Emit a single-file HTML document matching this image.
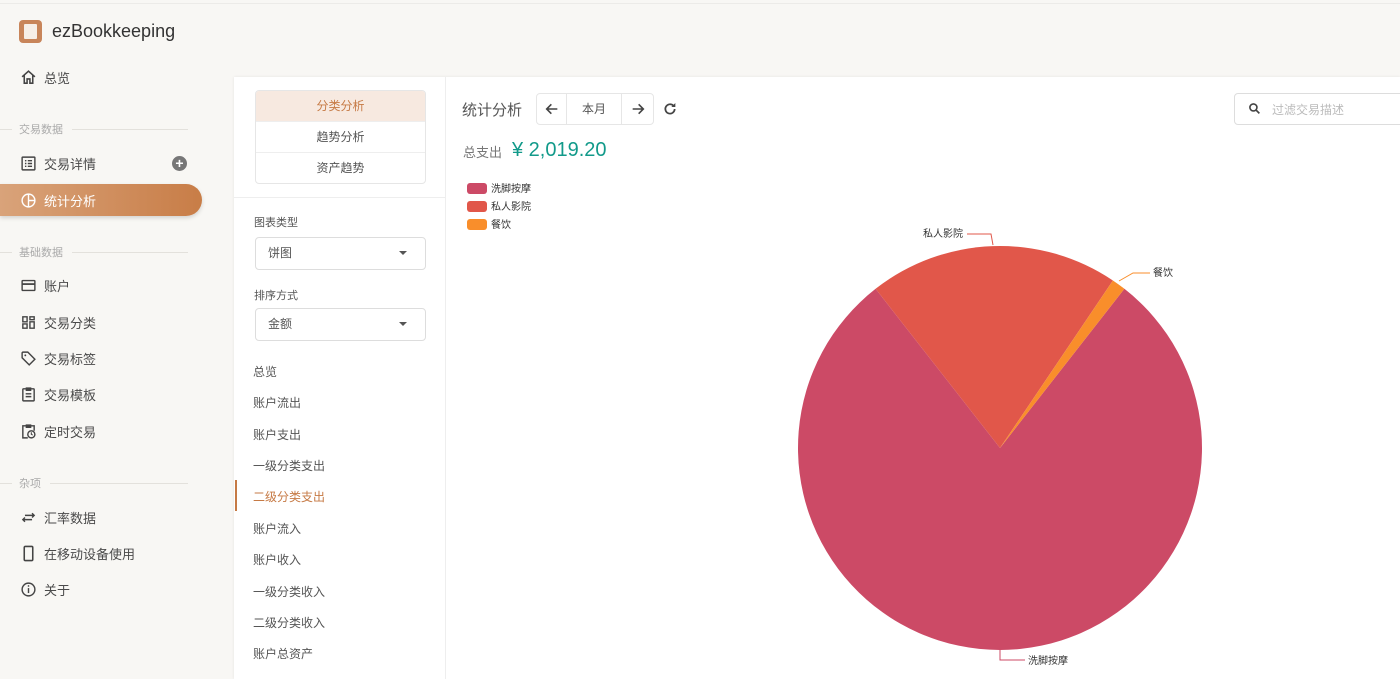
<!DOCTYPE html>
<html><head><meta charset="utf-8"><style>
*{margin:0;padding:0;box-sizing:border-box}
body{width:1400px;height:679px;overflow:hidden;background:#f8f7f4;font-family:"Liberation Sans","Noto Sans CJK SC",sans-serif;color:#444;position:relative}
.abs{position:absolute}
.nav{position:absolute;left:20px;font-size:13px;color:#4a4a4a;display:flex;align-items:center;margin-top:-1px}
.nav svg{width:17px;height:17px;margin-right:7px}
.sec{position:absolute;left:0;width:188px;font-size:11px;color:#aaa;display:flex;align-items:center}
.sec:before{content:"";width:12px;border-top:1px solid #e3e1dc;margin-right:7px}
.sec:after{content:"";flex:1;border-top:1px solid #e3e1dc;margin-left:9px}
.lst{position:absolute;left:253px;font-size:12px;color:#555}
</style></head><body>
<div class="abs" style="left:0;top:3px;width:1400px;border-top:1px solid #ecebe8"></div>
<div class="abs" style="left:19px;top:20px;width:23px;height:23px;border-radius:4px;background:#c8855a"><div style="position:absolute;left:5px;top:4px;width:13px;height:15px;background:#f6efe8;border-radius:1px"></div></div>
<div class="abs" style="left:52px;top:21px;font-size:18px;color:#333">ezBookkeeping</div>

<div class="nav" style="top:69px"><svg viewBox="0 0 24 24"><path d="M3 11L12 3l9 8M6 9v11h4v-6h4v6h4V9" fill="none" stroke="#444" stroke-width="2.2"/></svg>总览</div>
<div class="sec" style="top:121px">交易数据</div>
<div class="nav" style="top:155px"><svg viewBox="0 0 24 24"><rect x="3" y="3" width="18" height="18" rx="1" fill="none" stroke="#444" stroke-width="2"/><path d="M7 8h2M7 12h2M7 16h2M11 8h6M11 12h6M11 16h6" stroke="#444" stroke-width="2"/></svg>交易详情</div>
<div class="abs" style="left:172px;top:156px;width:15px;height:15px;border-radius:50%;background:#777;color:#fff;font-size:14px;line-height:15px;text-align:center;font-weight:bold">+</div>
<div class="abs" style="left:0;top:184px;width:202px;height:32px;border-radius:0 16px 16px 0;background:linear-gradient(90deg,#d9a37a,#c87d47);box-shadow:0 2px 4px rgba(0,0,0,.15)"></div>
<div class="nav" style="top:192px;color:#fff"><svg viewBox="0 0 24 24"><circle cx="12" cy="12" r="9" fill="none" stroke="#fff" stroke-width="2"/><path d="M12 3v18M12 12h9" stroke="#fff" stroke-width="2"/></svg>统计分析</div>
<div class="sec" style="top:244px">基础数据</div>
<div class="nav" style="top:277px"><svg viewBox="0 0 24 24"><rect x="3" y="5" width="18" height="14" rx="1" fill="none" stroke="#444" stroke-width="2"/><path d="M3 10h18" stroke="#444" stroke-width="2.5"/></svg>账户</div>
<div class="nav" style="top:314px"><svg viewBox="0 0 24 24"><path d="M4 4h6v7H4zM14 4h6v4h-6zM14 11h6v9h-6zM4 14h6v6H4z" fill="none" stroke="#444" stroke-width="2"/></svg>交易分类</div>
<div class="nav" style="top:350px"><svg viewBox="0 0 24 24"><path d="M3 4v7l10 10 8-8L11 3H4z" fill="none" stroke="#444" stroke-width="2"/><circle cx="7.5" cy="7.5" r="1.3" fill="#444"/></svg>交易标签</div>
<div class="nav" style="top:386px"><svg viewBox="0 0 24 24"><rect x="4" y="4" width="16" height="17" rx="1" fill="none" stroke="#444" stroke-width="2"/><path d="M9 3h6v3H9zM8 11h8M8 15h8" stroke="#444" stroke-width="2" fill="none"/></svg>交易模板</div>
<div class="nav" style="top:423px"><svg viewBox="0 0 24 24"><path d="M11 21H4V4h16v7M9 3h6v3H9z" fill="none" stroke="#444" stroke-width="2"/><circle cx="16" cy="16" r="5" fill="none" stroke="#444" stroke-width="2"/><path d="M16 13v3l2 1" stroke="#444" stroke-width="1.5" fill="none"/></svg>定时交易</div>
<div class="sec" style="top:475px">杂项</div>
<div class="nav" style="top:509px"><svg viewBox="0 0 24 24"><path d="M4 15h13M7 12l-3 3 3 3M20 9H7M17 6l3 3-3 3" fill="none" stroke="#444" stroke-width="2"/></svg>汇率数据</div>
<div class="nav" style="top:545px"><svg viewBox="0 0 24 24"><rect x="6" y="2" width="12" height="20" rx="1.5" fill="none" stroke="#444" stroke-width="2.2"/></svg>在移动设备使用</div>
<div class="nav" style="top:581px"><svg viewBox="0 0 24 24"><circle cx="12" cy="12" r="9" fill="none" stroke="#444" stroke-width="2"/><path d="M12 10v7" stroke="#444" stroke-width="2"/><circle cx="12" cy="7" r="1.2" fill="#444"/></svg>关于</div>

<div class="abs" style="left:234px;top:77px;width:1166px;height:602px;background:#fff;box-shadow:0 0 3px rgba(0,0,0,.08)"></div>
<div class="abs" style="left:445px;top:77px;height:602px;border-left:1px solid #eee"></div>
<div class="abs" style="left:234px;top:197px;width:211px;border-top:1px solid #eee"></div>
<div class="abs" style="left:255px;top:90px;width:171px;height:94px;border:1px solid #e6e6e6;border-radius:4px;overflow:hidden;font-size:12px;text-align:center">
<div style="height:31px;line-height:31px;background:#f7e9e0;color:#c67a45;border-bottom:1px solid #eee">分类分析</div>
<div style="height:31px;line-height:31px;color:#555;border-bottom:1px solid #eee">趋势分析</div>
<div style="height:31px;line-height:31px;color:#555">资产趋势</div></div>
<div class="abs" style="left:254px;top:214px;font-size:11px;color:#555">图表类型</div>
<div class="abs" style="left:255px;top:237px;width:171px;height:33px;border:1px solid #ddd;border-radius:4px;font-size:12px;line-height:31px;padding-left:12px;color:#555">饼图<span style="position:absolute;right:18px;top:13px;border:4px solid transparent;border-top:4px solid #555"></span></div>
<div class="abs" style="left:254px;top:287px;font-size:11px;color:#555">排序方式</div>
<div class="abs" style="left:255px;top:308px;width:171px;height:33px;border:1px solid #ddd;border-radius:4px;font-size:12px;line-height:31px;padding-left:12px;color:#555">金额<span style="position:absolute;right:18px;top:13px;border:4px solid transparent;border-top:4px solid #555"></span></div>
<div class="lst" style="top:363px">总览</div>
<div class="lst" style="top:394px">账户流出</div>
<div class="lst" style="top:426px">账户支出</div>
<div class="lst" style="top:457px">一级分类支出</div>
<div class="lst" style="top:488px;color:#c67a45">二级分类支出</div>
<div class="abs" style="left:235px;top:480px;height:31px;border-left:2px solid #c67a45"></div>
<div class="lst" style="top:520px">账户流入</div>
<div class="lst" style="top:551px">账户收入</div>
<div class="lst" style="top:583px">一级分类收入</div>
<div class="lst" style="top:614px">二级分类收入</div>
<div class="lst" style="top:645px">账户总资产</div>

<div class="abs" style="left:462px;top:99px;font-size:15px;color:#555">统计分析</div>
<div class="abs" style="left:536px;top:93px;width:118px;height:32px;border:1px solid #e6e6e6;border-radius:4px;display:flex;font-size:12px;color:#555">
<div style="width:30px;border-right:1px solid #e6e6e6;display:flex;align-items:center;justify-content:center"><svg width="16" height="16" viewBox="0 0 24 24"><path d="M20 12H5M11 5l-7 7 7 7" fill="none" stroke="#444" stroke-width="2.4"/></svg></div>
<div style="width:55px;border-right:1px solid #e6e6e6;text-align:center;line-height:30px">本月</div>
<div style="flex:1;display:flex;align-items:center;justify-content:center"><svg width="16" height="16" viewBox="0 0 24 24"><path d="M4 12h15M13 5l7 7-7 7" fill="none" stroke="#444" stroke-width="2.4"/></svg></div></div>
<svg class="abs" style="left:662px;top:101px" width="16" height="16" viewBox="0 0 24 24"><path d="M19 12a7 7 0 1 1-2-5" fill="none" stroke="#444" stroke-width="2.6"/><path d="M20 3v6h-6z" fill="#444"/></svg>
<div class="abs" style="left:1234px;top:93px;width:180px;height:32px;border:1px solid #ddd;border-radius:4px"></div>
<svg class="abs" style="left:1248px;top:102px" width="13" height="13" viewBox="0 0 24 24"><circle cx="10" cy="10" r="6.5" fill="none" stroke="#444" stroke-width="3"/><path d="M15 15l6 6" stroke="#444" stroke-width="3"/></svg>
<div class="abs" style="left:1272px;top:101px;font-size:12px;color:#bbb">过滤交易描述</div>
<div class="abs" style="left:463px;top:142px;font-size:13px;color:#777">总支出</div>
<div class="abs" style="left:512px;top:139px;font-size:20px;color:#129a8a">¥ 2,019.20</div>

<svg class="abs" style="left:0;top:0" width="1400" height="679">
<g font-size="10" fill="#333" font-family="Liberation Sans,Noto Sans CJK SC,sans-serif">
<rect x="467" y="183" width="20" height="11" rx="3" fill="#cc4a66"/><text x="491" y="192">洗脚按摩</text>
<rect x="467" y="201" width="20" height="11" rx="3" fill="#e1574a"/><text x="491" y="210">私人影院</text>
<rect x="467" y="219" width="20" height="11" rx="3" fill="#f98e2b"/><text x="491" y="228">餐饮</text>
<path d="M1000 448L875.6 288.8A202 202 0 1 0 1124.4 288.8Z" fill="#cc4a66"/>
<path d="M1000 448L1112.9 280.5A202 202 0 0 0 875.6 288.8Z" fill="#e1574a"/>
<path d="M1000 448L1124.4 288.8A202 202 0 0 0 1112.9 280.5Z" fill="#f98e2b"/>
<path d="M967 234H991L993 245" fill="none" stroke="#e1574a"/>
<text x="923" y="237">私人影院</text>
<path d="M1119 281L1133 273H1150" fill="none" stroke="#f98e2b"/>
<text x="1153" y="276">餐饮</text>
<path d="M1000 650V660H1025" fill="none" stroke="#cc4a66"/>
<text x="1028" y="664">洗脚按摩</text>
</g></svg>
</body></html>
